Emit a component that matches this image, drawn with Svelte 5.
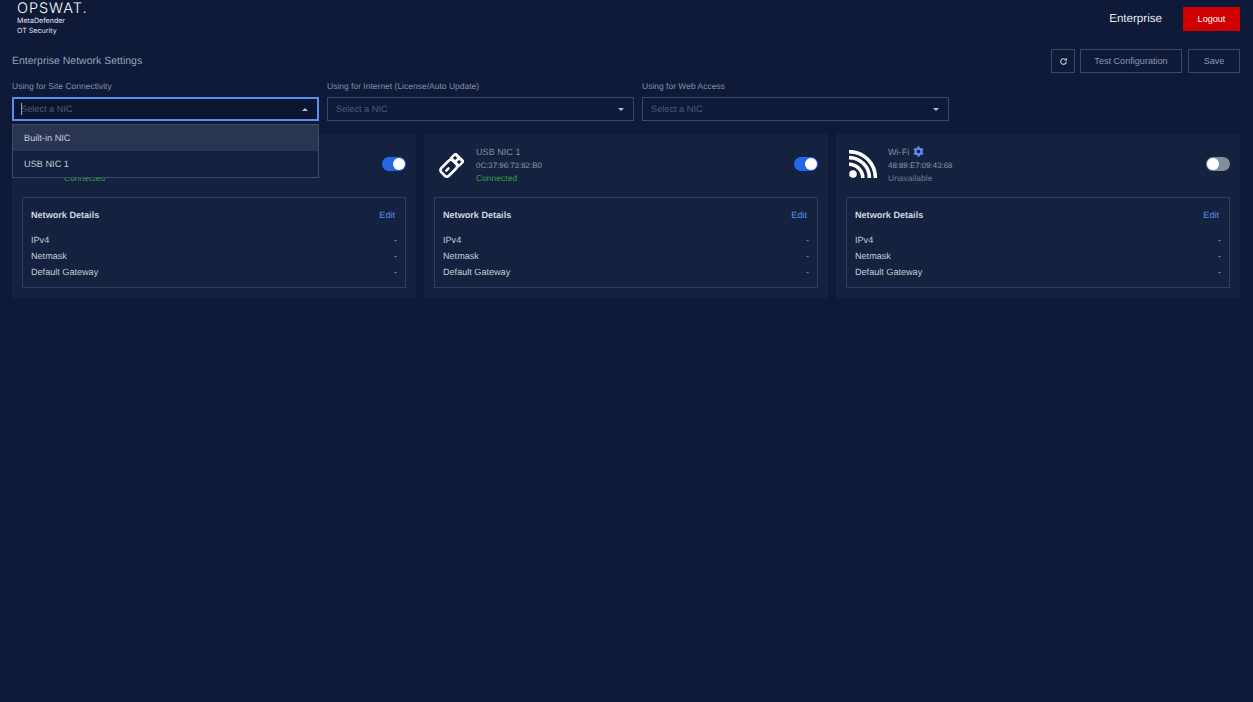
<script lang="ts">
	interface Nic {
		name: string;
		mac: string;
		status: string;
		connected: boolean;
		enabled: boolean;
		kind: 'ethernet' | 'usb' | 'wifi';
		gear?: boolean;
	}

	const pickers = ['Using for Site Connectivity', 'Using for Internet (License/Auto Update)', 'Using for Web Access'];

	const nics: Nic[] = [
		{ name: 'Built-in NIC', mac: '00:1A:2B:3C:4D:5E', status: 'Connected', connected: true, enabled: true, kind: 'ethernet' },
		{ name: 'USB NIC 1', mac: '0C:37:96:73:82:B0', status: 'Connected', connected: true, enabled: true, kind: 'usb' },
		{ name: 'Wi-Fi', mac: '48:89:E7:09:43:68', status: 'Unavailable', connected: false, enabled: false, kind: 'wifi', gear: true }
	];

	const details = ['IPv4', 'Netmask', 'Default Gateway'];
</script>

<div class="page">
	<header class="topbar">
		<div class="logo">
			<div class="wordmark">OPSWAT.</div>
			<div class="product">MetaDefender</div>
			<div class="product">OT Security</div>
		</div>
		<div class="account">
			<span class="edition">Enterprise</span>
			<button class="logout" type="button">Logout</button>
		</div>
	</header>

	<div class="title-row">
		<h1>Enterprise Network Settings</h1>
		<div class="actions">
			<button class="btn icon" type="button" aria-label="Refresh">
				<svg viewBox="0 0 24 24" width="9" height="9" aria-hidden="true">
					<path d="M19.5 12a7.5 7.5 0 1 1-2.3-5.4" fill="none" stroke="currentColor" stroke-width="2.8" />
					<path d="M21 2v7.5h-7.5z" fill="currentColor" />
				</svg>
			</button>
			<button class="btn test" type="button">Test Configuration</button>
			<button class="btn save" type="button">Save</button>
		</div>
	</div>

	<div class="pickers">
		{#each pickers as label, i}
			<div class="picker">
				<div class="picker-label">{label}</div>
				<div class="select" class:open={i === 0}>
					{#if i === 0}<span class="caret"></span>{/if}
					<span>Select a NIC</span>
					<span class="arrow" class:up={i === 0}></span>
				</div>
				{#if i === 0}
					<div class="menu">
						<div class="option active">Built-in NIC</div>
						<div class="option">USB NIC 1</div>
					</div>
				{/if}
			</div>
		{/each}
	</div>

	<div class="cards">
		{#each nics as nic}
			<section class="card">
				<div class="card-head">
					<div class="nic-icon {nic.kind}">
						{#if nic.kind === 'usb'}
							<svg viewBox="0 0 26 26" width="25" height="25" aria-hidden="true">
								<g transform="rotate(-45 13 13)">
									<rect x="0.6" y="7.4" width="17" height="11.2" rx="3" fill="none" stroke="#fff" stroke-width="2.8" />
									<rect x="4" y="11.7" width="6" height="2.6" rx="1.3" fill="#fff" />
									<path d="M17 6h7.6a1.4 1.4 0 0 1 1.4 1.4v11.2a1.4 1.4 0 0 1-1.4 1.4H17z" fill="#fff" />
									<rect x="19.6" y="8.4" width="3.2" height="3.2" fill="#14213f" />
									<rect x="19.6" y="14.4" width="3.2" height="3.2" fill="#14213f" />
								</g>
							</svg>
						{:else if nic.kind === 'wifi'}
							<svg viewBox="0 0 28 28" width="28" height="28" aria-hidden="true">
								<circle cx="4" cy="24" r="3.8" fill="#fff" />
								<g fill="none" stroke="#fff" stroke-width="3.6">
									<path d="M0 14.2a13.8 13.8 0 0 1 13.8 13.8" />
									<path d="M0 7.6a20.4 20.4 0 0 1 20.4 20.4" />
									<path d="M0 1.6a26.4 26.4 0 0 1 26.4 26.4" />
								</g>
							</svg>
						{/if}
					</div>
					<div class="nic-info">
						<div class="nic-name">
							{nic.name}
							{#if nic.gear}
								<svg viewBox="0 0 24 24" width="11" height="11" aria-hidden="true">
									<circle cx="12" cy="12" r="6.5" fill="none" stroke="#5b8def" stroke-width="5" />
									<g stroke="#5b8def" stroke-width="4.4">
										<path d="M12 0.5v5M12 18.5v5" />
										<path d="M2 6.2l4.4 2.6M17.6 15.2l4.4 2.6" />
										<path d="M2 17.8l4.4-2.6M17.6 8.8l4.4-2.6" />
									</g>
								</svg>
							{/if}
						</div>
						<div class="nic-mac">{nic.mac}</div>
						<div class="nic-status" class:connected={nic.connected}>{nic.status}</div>
					</div>
					<span class="toggle" class:on={nic.enabled}><span class="knob"></span></span>
				</div>
				<div class="details">
					<div class="details-head">
						<strong>Network Details</strong>
						<span class="edit">Edit</span>
					</div>
					{#each details as row}
						<div class="detail-row"><span>{row}</span><span class="dash">-</span></div>
					{/each}
				</div>
			</section>
		{/each}
	</div>
</div>

<style>
	:global(body) {
		margin: 0;
		background: #0e1a38;
	}
	.page {
		height: 702px;
		box-sizing: border-box;
		padding: 0 13px 0 12px;
		background: #0e1a38;
		color: #c6ccd9;
		font-family: 'Liberation Sans', Arial, sans-serif;
		font-size: 9.1px;
		text-rendering: geometricPrecision;
		overflow: hidden;
	}
	.topbar {
		display: flex;
		justify-content: space-between;
		height: 49px;
	}
	.logo {
		padding: 1px 0 0 5px;
		color: #e2e5ec;
		font-family: Inter, 'Liberation Sans', sans-serif;
	}
	.wordmark {
		font-size: 14.5px;
		font-weight: 300;
		letter-spacing: 0.95px;
		line-height: 16px;
		color: #fff;
		margin-bottom: -1px;
	}
	.product {
		font-size: 7.1px;
		line-height: 9.5px;
	}
	.account {
		display: flex;
		align-items: flex-start;
		gap: 21px;
		padding-top: 7px;
	}
	.edition {
		font-size: 11.6px;
		line-height: 24px;
		color: #e4e7ee;
	}
	.logout {
		width: 57px;
		height: 24px;
		border: 0;
		padding: 0;
		background: #d00000;
		color: #fff;
		font: inherit;
		font-size: 9.1px;
	}
	.title-row {
		display: flex;
		justify-content: space-between;
		align-items: center;
		height: 24px;
	}
	h1 {
		margin: 0;
		font-size: 10.5px;
		font-weight: 400;
		color: #97a2b8;
	}
	.actions {
		display: flex;
		gap: 5px;
	}
	.btn {
		height: 24px;
		box-sizing: border-box;
		padding: 0;
		background: transparent;
		border: 1px solid #38466a;
		color: #8b97b0;
		font: inherit;
		font-size: 9.1px;
		display: flex;
		align-items: center;
		justify-content: center;
	}
	.icon {
		width: 24px;
		color: #c6ccd9;
	}
	.test {
		width: 102px;
	}
	.save {
		width: 52px;
		margin-left: 1px;
	}
	.pickers {
		display: flex;
		gap: 8px;
		margin-top: 7px;
	}
	.picker {
		position: relative;
		width: 307px;
	}
	.picker-label {
		height: 17px;
		line-height: 13px;
		font-size: 8.5px;
		color: #8490a8;
	}
	.select {
		height: 24px;
		box-sizing: border-box;
		display: flex;
		align-items: center;
		padding: 0 8px;
		border: 1px solid #38466a;
		color: #4e5b7a;
		font-size: 9.2px;
		position: relative;
	}
	.select.open {
		border: 2px solid #5b8def;
		padding: 0 7px;
		background: #0b1530;
	}
	.caret {
		width: 1px;
		height: 12px;
		background: #9aa6c0;
		margin-right: -1px;
	}
	.arrow {
		position: absolute;
		right: 9px;
		top: 10px;
		border-left: 3px solid transparent;
		border-right: 3px solid transparent;
		border-top: 3px solid #b7bfce;
	}
	.arrow.up {
		border-top: 0;
		border-bottom: 3px solid #b7bfce;
		top: 9px;
	}
	.menu {
		position: absolute;
		z-index: 2;
		left: 0;
		right: 0;
		top: 44px;
		border: 1px solid #3c4865;
		background: #14203f;
		box-sizing: border-box;
	}
	.option {
		height: 26px;
		line-height: 27px;
		padding-left: 11px;
		font-size: 9.2px;
		color: #c6ccd9;
	}
	.option.active {
		background: #2a3552;
	}
	.cards {
		display: flex;
		gap: 8px;
		margin-top: 13px;
	}
	.card {
		width: 404px;
		height: 164px;
		box-sizing: border-box;
		padding: 10px;
		background: #14213f;
	}
	.card-head {
		display: flex;
		height: 53px;
		position: relative;
	}
	.nic-icon {
		width: 42px;
		box-sizing: border-box;
	}
	.nic-icon.usb {
		padding: 9px 0 0 5px;
	}
	.nic-icon.wifi {
		padding: 6px 0 0 3px;
	}
	.nic-name {
		font-size: 9.1px;
		line-height: 14px;
		color: #858ea4;
		display: flex;
		align-items: center;
		gap: 4px;
	}
	.nic-mac {
		font-size: 7.9px;
		line-height: 14px;
		color: #8f9ab0;
	}
	.nic-status {
		font-size: 8.5px;
		line-height: 11px;
		color: #6f7a92;
	}
	.nic-status.connected {
		color: #3b9b46;
	}
	.nic-info {
		margin-top: 0.5px;
	}
	.toggle {
		position: absolute;
		right: 0;
		top: 13px;
		width: 24px;
		height: 14px;
		border-radius: 7px;
		background: #828d9c;
	}
	.toggle.on {
		background: #2468e8;
	}
	.knob {
		position: absolute;
		left: 1px;
		top: 1px;
		width: 12px;
		height: 12px;
		border-radius: 50%;
		background: #fff;
	}
	.toggle.on .knob {
		left: 11px;
	}
	.details {
		height: 91px;
		box-sizing: border-box;
		border: 1px solid #303d60;
		padding: 0 8px;
	}
	.details-head {
		display: flex;
		justify-content: space-between;
		align-items: center;
		height: 34px;
		color: #d3d7e1;
		padding-right: 2px;
	}
	.edit {
		color: #5b8def;
	}
	.detail-row {
		display: flex;
		justify-content: space-between;
		height: 16px;
		line-height: 16px;
		color: #c6ccd9;
	}
	.dash {
		color: #8f9ab0;
	}
</style>
